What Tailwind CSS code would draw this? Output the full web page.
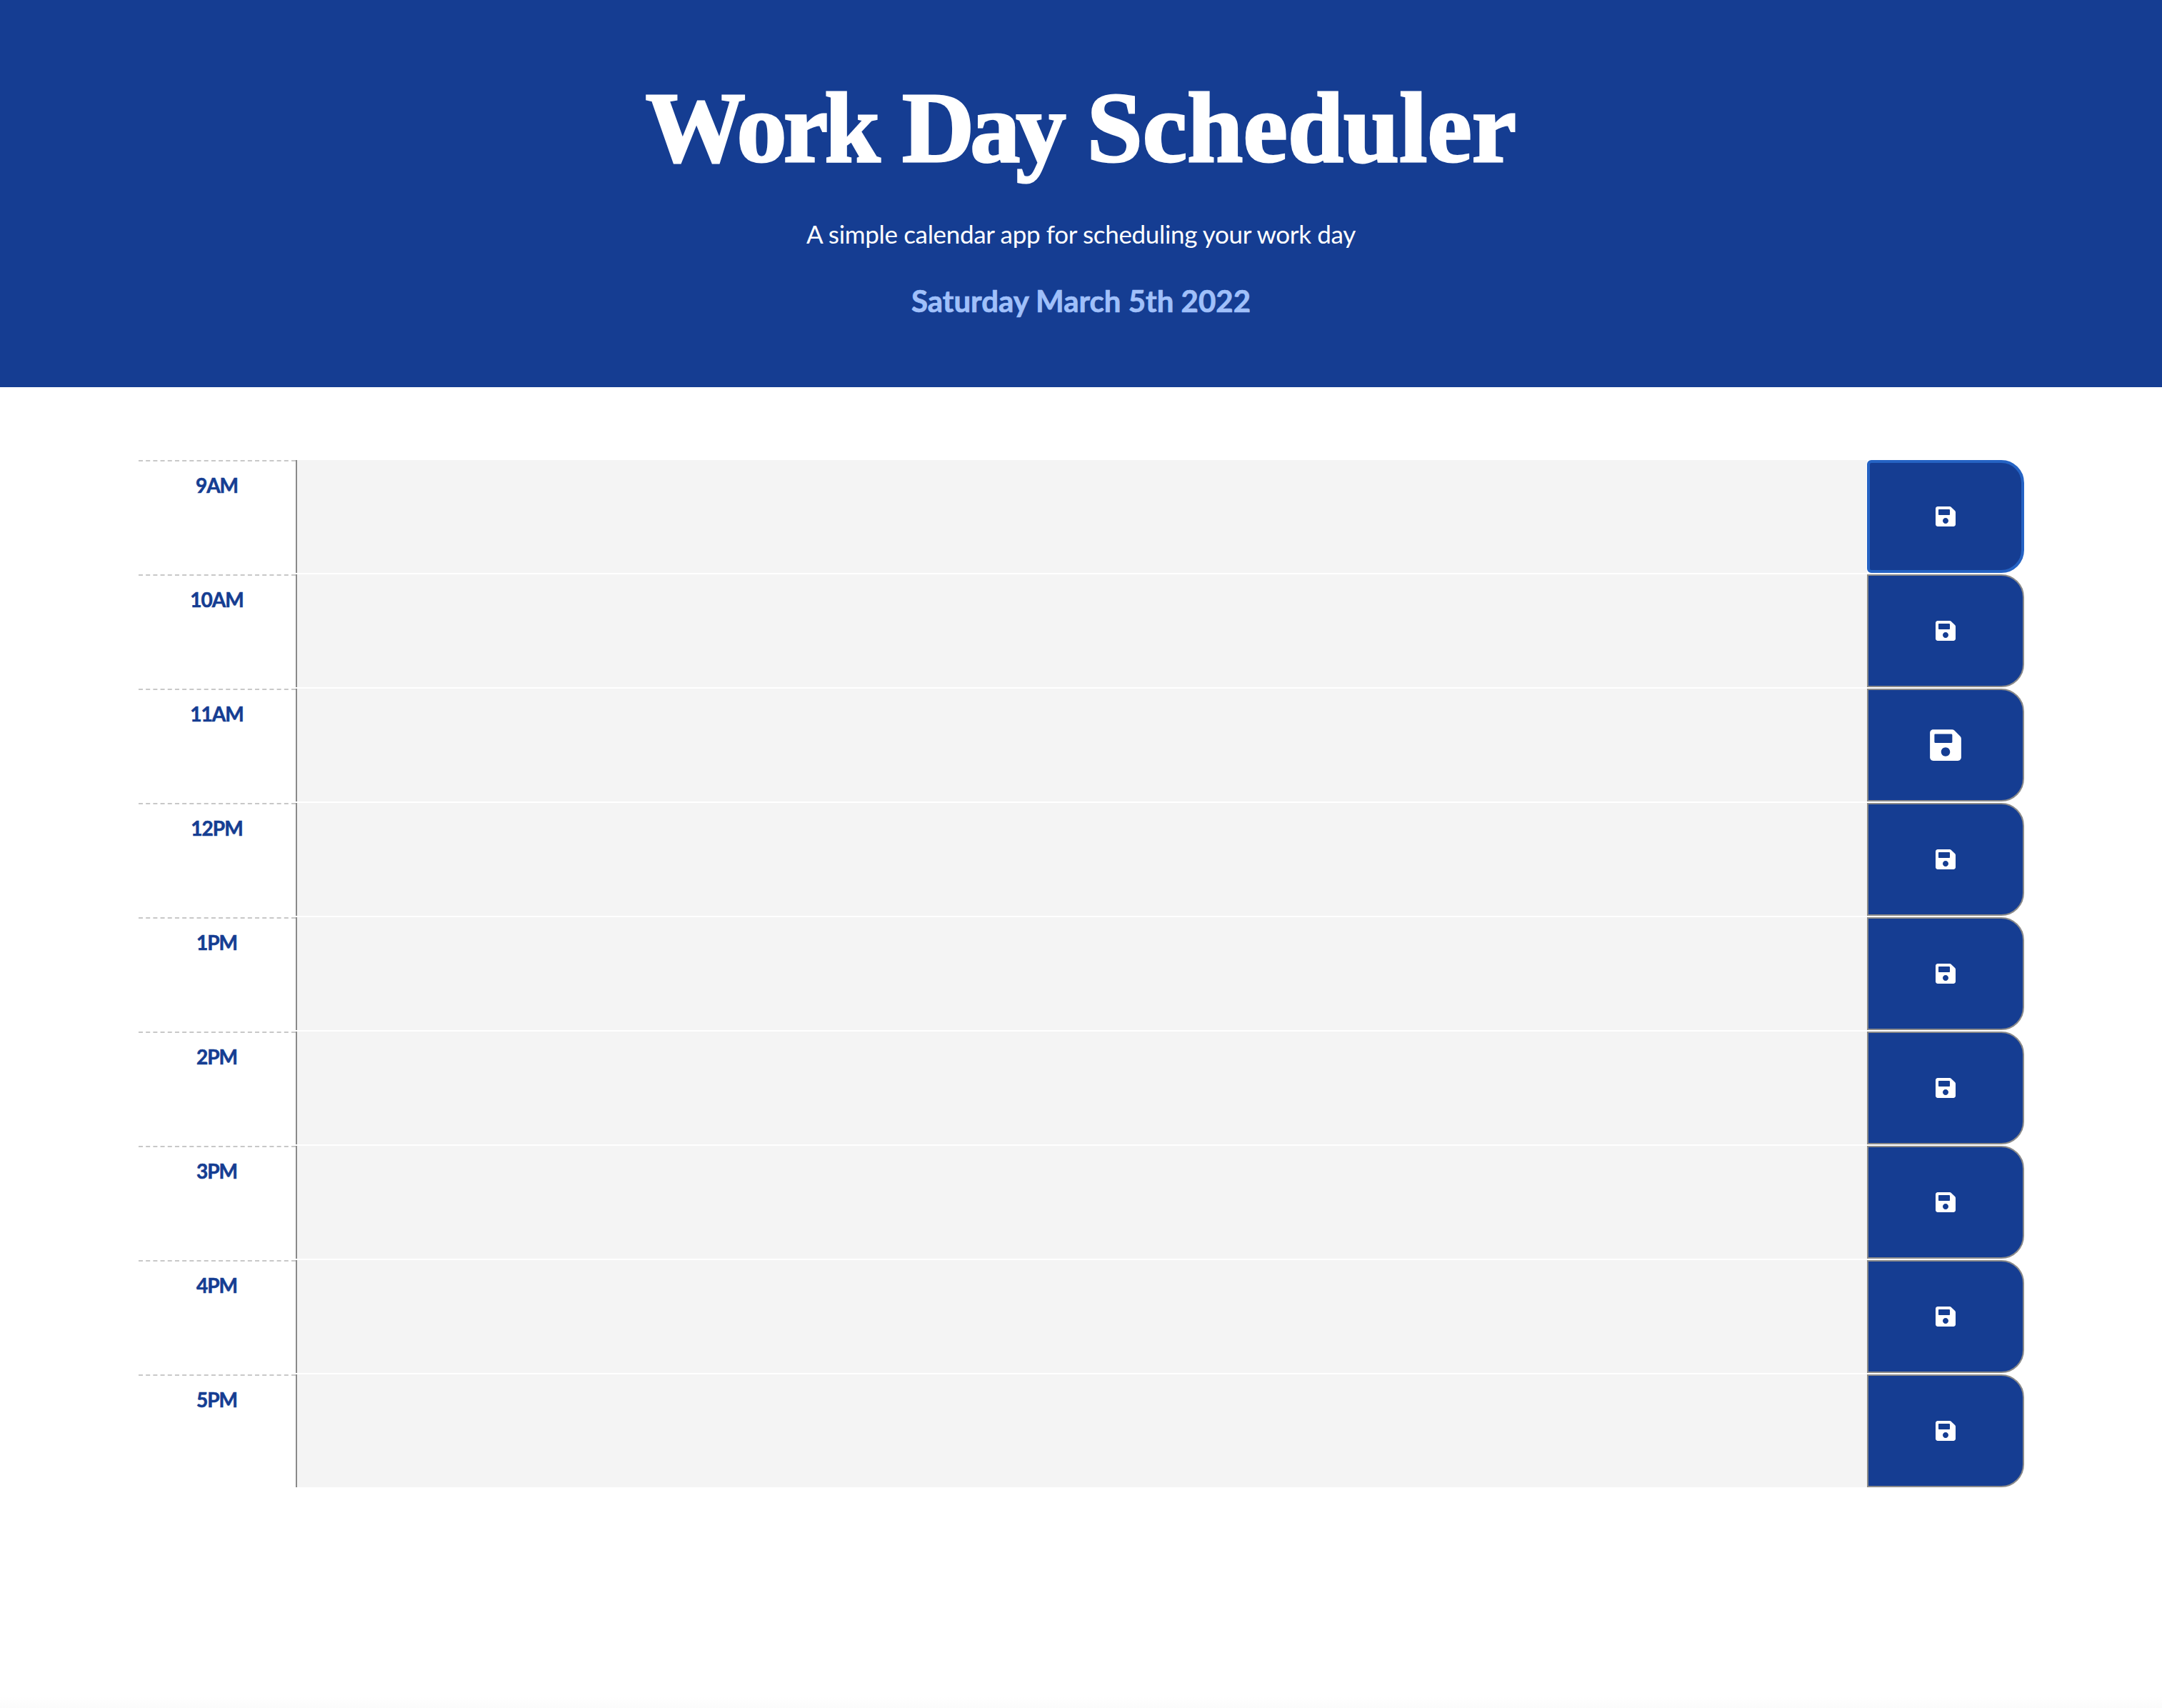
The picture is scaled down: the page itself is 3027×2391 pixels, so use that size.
<!doctype html>
<html lang="en">
    <head>
        <meta charset="UTF-8" />
        <meta name="viewport" content="width=device-width, initial-scale=1.0" />
        <title>Work Day Scheduler</title>
        <script src="https://cdn.jsdelivr.net/npm/@tailwindcss/browser@4"></script>
    </head>
    <body class="bg-white min-h-screen flex flex-col font-['Lato',sans-serif]">
        <header class="h-[542px] bg-[#153d92] text-white text-center flex flex-col items-center">
            <h1 class="mt-[94px] text-[140px] leading-[170px] font-bold font-['Liberation_Serif',serif] [-webkit-text-stroke:3px_white]"><span class="tracking-[-4.5px]">Work</span> <span class="tracking-[-5.8px]">Day</span> <span class="tracking-[0.3px]">Scheduler</span></h1>
            <p class="mt-[39px] text-[35px] leading-[48px] tracking-[-0.33px]">A simple calendar app for scheduling your work day</p>
            <p class="mt-[45px] text-[42px] leading-[50px] font-bold text-[#a0c0fa] [-webkit-text-stroke:0.7px_#a0c0fa]">Saturday March 5th 2022</p>
        </header>

        <main class="mx-auto mt-[102px] w-[2640px]">
            <div class="flex h-[158px] mb-[2px]">
                <div class="w-[220px] shrink-0 border-t-2 border-dashed border-[#c8c8c8] pt-[15px] text-center text-[28px] leading-[36px] tracking-[-1px] font-bold text-[#153d92] [-webkit-text-stroke:0.6px_#153d92]">9AM</div>
                <textarea class="flex-1 bg-[#f4f4f4] border-l-2 border-[#8a8a8a] resize-none outline-none"></textarea>
                <button class="w-[220px] shrink-0 flex items-center justify-center bg-[#153d92] border-4 border-[#2563c4] rounded-l-[6px] rounded-r-[32px] shadow-[0_0_0_1px_white]">
                    <svg class="w-[28px] h-[32px] fill-white" viewBox="0 0 448 512"><path d="M433.941 129.941l-83.882-83.882A48 48 0 0 0 316.118 32H48C21.49 32 0 53.49 0 80v352c0 26.51 21.49 48 48 48h352c26.51 0 48-21.49 48-48V163.882a48 48 0 0 0-14.059-33.941zM224 416c-35.346 0-64-28.654-64-64 0-35.346 28.654-64 64-64s64 28.654 64 64c0 35.346-28.654 64-64 64zm96-304.52V212c0 6.627-5.373 12-12 12H76c-6.627 0-12-5.373-12-12V108c0-6.627 5.373-12 12-12h228.52c3.183 0 6.235 1.264 8.485 3.515l3.48 3.48A11.996 11.996 0 0 1 320 111.48z"/></svg>
                </button>
            </div>
            <div class="flex h-[158px] mb-[2px]">
                <div class="w-[220px] shrink-0 border-t-2 border-dashed border-[#c8c8c8] pt-[15px] text-center text-[28px] leading-[36px] tracking-[-1px] font-bold text-[#153d92] [-webkit-text-stroke:0.6px_#153d92]">10AM</div>
                <textarea class="flex-1 bg-[#f4f4f4] border-l-2 border-[#8a8a8a] resize-none outline-none"></textarea>
                <button class="w-[220px] shrink-0 flex items-center justify-center bg-[#153d92] border-2 border-[#8a8a8a] rounded-r-[32px]">
                    <svg class="w-[28px] h-[32px] fill-white" viewBox="0 0 448 512"><path d="M433.941 129.941l-83.882-83.882A48 48 0 0 0 316.118 32H48C21.49 32 0 53.49 0 80v352c0 26.51 21.49 48 48 48h352c26.51 0 48-21.49 48-48V163.882a48 48 0 0 0-14.059-33.941zM224 416c-35.346 0-64-28.654-64-64 0-35.346 28.654-64 64-64s64 28.654 64 64c0 35.346-28.654 64-64 64zm96-304.52V212c0 6.627-5.373 12-12 12H76c-6.627 0-12-5.373-12-12V108c0-6.627 5.373-12 12-12h228.52c3.183 0 6.235 1.264 8.485 3.515l3.48 3.48A11.996 11.996 0 0 1 320 111.48z"/></svg>
                </button>
            </div>
            <div class="flex h-[158px] mb-[2px]">
                <div class="w-[220px] shrink-0 border-t-2 border-dashed border-[#c8c8c8] pt-[15px] text-center text-[28px] leading-[36px] tracking-[-1px] font-bold text-[#153d92] [-webkit-text-stroke:0.6px_#153d92]">11AM</div>
                <textarea class="flex-1 bg-[#f4f4f4] border-l-2 border-[#8a8a8a] resize-none outline-none"></textarea>
                <button class="w-[220px] shrink-0 flex items-center justify-center bg-[#153d92] border-2 border-[#8a8a8a] rounded-r-[32px]">
                    <svg class="w-[44px] h-[50px] fill-white" viewBox="0 0 448 512"><path d="M433.941 129.941l-83.882-83.882A48 48 0 0 0 316.118 32H48C21.49 32 0 53.49 0 80v352c0 26.51 21.49 48 48 48h352c26.51 0 48-21.49 48-48V163.882a48 48 0 0 0-14.059-33.941zM224 416c-35.346 0-64-28.654-64-64 0-35.346 28.654-64 64-64s64 28.654 64 64c0 35.346-28.654 64-64 64zm96-304.52V212c0 6.627-5.373 12-12 12H76c-6.627 0-12-5.373-12-12V108c0-6.627 5.373-12 12-12h228.52c3.183 0 6.235 1.264 8.485 3.515l3.48 3.48A11.996 11.996 0 0 1 320 111.48z"/></svg>
                </button>
            </div>
            <div class="flex h-[158px] mb-[2px]">
                <div class="w-[220px] shrink-0 border-t-2 border-dashed border-[#c8c8c8] pt-[15px] text-center text-[28px] leading-[36px] tracking-[-1px] font-bold text-[#153d92] [-webkit-text-stroke:0.6px_#153d92]">12PM</div>
                <textarea class="flex-1 bg-[#f4f4f4] border-l-2 border-[#8a8a8a] resize-none outline-none"></textarea>
                <button class="w-[220px] shrink-0 flex items-center justify-center bg-[#153d92] border-2 border-[#8a8a8a] rounded-r-[32px]">
                    <svg class="w-[28px] h-[32px] fill-white" viewBox="0 0 448 512"><path d="M433.941 129.941l-83.882-83.882A48 48 0 0 0 316.118 32H48C21.49 32 0 53.49 0 80v352c0 26.51 21.49 48 48 48h352c26.51 0 48-21.49 48-48V163.882a48 48 0 0 0-14.059-33.941zM224 416c-35.346 0-64-28.654-64-64 0-35.346 28.654-64 64-64s64 28.654 64 64c0 35.346-28.654 64-64 64zm96-304.52V212c0 6.627-5.373 12-12 12H76c-6.627 0-12-5.373-12-12V108c0-6.627 5.373-12 12-12h228.52c3.183 0 6.235 1.264 8.485 3.515l3.48 3.48A11.996 11.996 0 0 1 320 111.48z"/></svg>
                </button>
            </div>
            <div class="flex h-[158px] mb-[2px]">
                <div class="w-[220px] shrink-0 border-t-2 border-dashed border-[#c8c8c8] pt-[15px] text-center text-[28px] leading-[36px] tracking-[-1px] font-bold text-[#153d92] [-webkit-text-stroke:0.6px_#153d92]">1PM</div>
                <textarea class="flex-1 bg-[#f4f4f4] border-l-2 border-[#8a8a8a] resize-none outline-none"></textarea>
                <button class="w-[220px] shrink-0 flex items-center justify-center bg-[#153d92] border-2 border-[#8a8a8a] rounded-r-[32px]">
                    <svg class="w-[28px] h-[32px] fill-white" viewBox="0 0 448 512"><path d="M433.941 129.941l-83.882-83.882A48 48 0 0 0 316.118 32H48C21.49 32 0 53.49 0 80v352c0 26.51 21.49 48 48 48h352c26.51 0 48-21.49 48-48V163.882a48 48 0 0 0-14.059-33.941zM224 416c-35.346 0-64-28.654-64-64 0-35.346 28.654-64 64-64s64 28.654 64 64c0 35.346-28.654 64-64 64zm96-304.52V212c0 6.627-5.373 12-12 12H76c-6.627 0-12-5.373-12-12V108c0-6.627 5.373-12 12-12h228.52c3.183 0 6.235 1.264 8.485 3.515l3.48 3.48A11.996 11.996 0 0 1 320 111.48z"/></svg>
                </button>
            </div>
            <div class="flex h-[158px] mb-[2px]">
                <div class="w-[220px] shrink-0 border-t-2 border-dashed border-[#c8c8c8] pt-[15px] text-center text-[28px] leading-[36px] tracking-[-1px] font-bold text-[#153d92] [-webkit-text-stroke:0.6px_#153d92]">2PM</div>
                <textarea class="flex-1 bg-[#f4f4f4] border-l-2 border-[#8a8a8a] resize-none outline-none"></textarea>
                <button class="w-[220px] shrink-0 flex items-center justify-center bg-[#153d92] border-2 border-[#8a8a8a] rounded-r-[32px]">
                    <svg class="w-[28px] h-[32px] fill-white" viewBox="0 0 448 512"><path d="M433.941 129.941l-83.882-83.882A48 48 0 0 0 316.118 32H48C21.49 32 0 53.49 0 80v352c0 26.51 21.49 48 48 48h352c26.51 0 48-21.49 48-48V163.882a48 48 0 0 0-14.059-33.941zM224 416c-35.346 0-64-28.654-64-64 0-35.346 28.654-64 64-64s64 28.654 64 64c0 35.346-28.654 64-64 64zm96-304.52V212c0 6.627-5.373 12-12 12H76c-6.627 0-12-5.373-12-12V108c0-6.627 5.373-12 12-12h228.52c3.183 0 6.235 1.264 8.485 3.515l3.48 3.48A11.996 11.996 0 0 1 320 111.48z"/></svg>
                </button>
            </div>
            <div class="flex h-[158px] mb-[2px]">
                <div class="w-[220px] shrink-0 border-t-2 border-dashed border-[#c8c8c8] pt-[15px] text-center text-[28px] leading-[36px] tracking-[-1px] font-bold text-[#153d92] [-webkit-text-stroke:0.6px_#153d92]">3PM</div>
                <textarea class="flex-1 bg-[#f4f4f4] border-l-2 border-[#8a8a8a] resize-none outline-none"></textarea>
                <button class="w-[220px] shrink-0 flex items-center justify-center bg-[#153d92] border-2 border-[#8a8a8a] rounded-r-[32px]">
                    <svg class="w-[28px] h-[32px] fill-white" viewBox="0 0 448 512"><path d="M433.941 129.941l-83.882-83.882A48 48 0 0 0 316.118 32H48C21.49 32 0 53.49 0 80v352c0 26.51 21.49 48 48 48h352c26.51 0 48-21.49 48-48V163.882a48 48 0 0 0-14.059-33.941zM224 416c-35.346 0-64-28.654-64-64 0-35.346 28.654-64 64-64s64 28.654 64 64c0 35.346-28.654 64-64 64zm96-304.52V212c0 6.627-5.373 12-12 12H76c-6.627 0-12-5.373-12-12V108c0-6.627 5.373-12 12-12h228.52c3.183 0 6.235 1.264 8.485 3.515l3.48 3.48A11.996 11.996 0 0 1 320 111.48z"/></svg>
                </button>
            </div>
            <div class="flex h-[158px] mb-[2px]">
                <div class="w-[220px] shrink-0 border-t-2 border-dashed border-[#c8c8c8] pt-[15px] text-center text-[28px] leading-[36px] tracking-[-1px] font-bold text-[#153d92] [-webkit-text-stroke:0.6px_#153d92]">4PM</div>
                <textarea class="flex-1 bg-[#f4f4f4] border-l-2 border-[#8a8a8a] resize-none outline-none"></textarea>
                <button class="w-[220px] shrink-0 flex items-center justify-center bg-[#153d92] border-2 border-[#8a8a8a] rounded-r-[32px]">
                    <svg class="w-[28px] h-[32px] fill-white" viewBox="0 0 448 512"><path d="M433.941 129.941l-83.882-83.882A48 48 0 0 0 316.118 32H48C21.49 32 0 53.49 0 80v352c0 26.51 21.49 48 48 48h352c26.51 0 48-21.49 48-48V163.882a48 48 0 0 0-14.059-33.941zM224 416c-35.346 0-64-28.654-64-64 0-35.346 28.654-64 64-64s64 28.654 64 64c0 35.346-28.654 64-64 64zm96-304.52V212c0 6.627-5.373 12-12 12H76c-6.627 0-12-5.373-12-12V108c0-6.627 5.373-12 12-12h228.52c3.183 0 6.235 1.264 8.485 3.515l3.48 3.48A11.996 11.996 0 0 1 320 111.48z"/></svg>
                </button>
            </div>
            <div class="flex h-[158px]">
                <div class="w-[220px] shrink-0 border-t-2 border-dashed border-[#c8c8c8] pt-[15px] text-center text-[28px] leading-[36px] tracking-[-1px] font-bold text-[#153d92] [-webkit-text-stroke:0.6px_#153d92]">5PM</div>
                <textarea class="flex-1 bg-[#f4f4f4] border-l-2 border-[#8a8a8a] resize-none outline-none"></textarea>
                <button class="w-[220px] shrink-0 flex items-center justify-center bg-[#153d92] border-2 border-[#8a8a8a] rounded-r-[32px]">
                    <svg class="w-[28px] h-[32px] fill-white" viewBox="0 0 448 512"><path d="M433.941 129.941l-83.882-83.882A48 48 0 0 0 316.118 32H48C21.49 32 0 53.49 0 80v352c0 26.51 21.49 48 48 48h352c26.51 0 48-21.49 48-48V163.882a48 48 0 0 0-14.059-33.941zM224 416c-35.346 0-64-28.654-64-64 0-35.346 28.654-64 64-64s64 28.654 64 64c0 35.346-28.654 64-64 64zm96-304.52V212c0 6.627-5.373 12-12 12H76c-6.627 0-12-5.373-12-12V108c0-6.627 5.373-12 12-12h228.52c3.183 0 6.235 1.264 8.485 3.515l3.48 3.48A11.996 11.996 0 0 1 320 111.48z"/></svg>
                </button>
            </div>
        </main>

        <footer class="mt-auto h-[16px] bg-linear-to-b from-white to-[#fbfbfb]"></footer>
    </body>
</html>
